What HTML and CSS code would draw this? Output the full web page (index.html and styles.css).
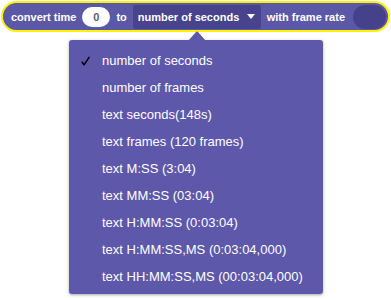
FILE: index.html
```html
<!DOCTYPE html>
<html>
<head>
<meta charset="utf-8">
<link rel="stylesheet" href="styles.css">
</head>
<body>
<div class="stage">
  <div class="block">
    <span class="label first">convert time</span>
    <span class="num">0</span>
    <span class="label">to</span>
    <span class="field">number of seconds<svg class="caret" width="8" height="5" viewBox="0 0 8 5"><path d="M0 0 L8 0 L4 5 Z" fill="#fff"/></svg></span>
    <span class="label">with frame rate</span>
    <span class="slot"></span>
  </div>
  <div class="menu">
    <svg class="pointer" width="18" height="10" viewBox="0 0 18 10"><path d="M0 10 L8 1 Q9 0 10 1 L18 10 Z" fill="#5d58a9"/></svg>
    <div class="item"><svg class="check" width="9" height="10" viewBox="0 0 9 10"><path d="M0.8 5.6 L3 8.8 L8.4 0.8" fill="none" stroke="#000" stroke-width="1.5" stroke-linejoin="round"/></svg>number of seconds</div>
    <div class="item">number of frames</div>
    <div class="item">text seconds(148s)</div>
    <div class="item">text frames (120 frames)</div>
    <div class="item">text M:SS (3:04)</div>
    <div class="item">text MM:SS (03:04)</div>
    <div class="item">text H:MM:SS (0:03:04)</div>
    <div class="item">text H:MM:SS,MS (0:03:04,000)</div>
    <div class="item">text HH:MM:SS,MS (00:03:04,000)</div>
  </div>
</div>
</body>
</html>
```
FILE: styles.css
```css
html, body {
  margin: 0;
  padding: 0;
  background: #ffffff;
}
.stage {
  width: 391px;
  height: 300px;
  padding-top: 1px;
  padding-left: 1px;
  box-sizing: border-box;
  font-family: "Liberation Sans", Arial, sans-serif;
}
.block {
  display: flex;
  align-items: center;
  width: 389px;
  height: 31px;
  box-sizing: border-box;
  border: 2px solid #fff200;
  border-radius: 16px;
  background: #5c58a8;
  padding: 0 2px 0 8px;
  gap: 6px;
}
.label {
  color: #ffffff;
  font-weight: bold;
  font-size: 11px;
  white-space: nowrap;
}
.num {
  width: 28px;
  height: 20px;
  border-radius: 10px;
  background: #ffffff;
  color: #575e75;
  font-size: 11px;
  font-weight: bold;
  display: flex;
  align-items: center;
  justify-content: center;
}
.field {
  display: flex;
  align-items: center;
  height: 24px;
  width: 128px;
  box-sizing: border-box;
  padding-left: 5px;
  border-radius: 3px;
  background: #47438d;
  color: #ffffff;
  font-weight: bold;
  font-size: 11px;
  white-space: nowrap;
}
.caret {
  margin-left: 8px;
}
.slot {
  width: 33px;
  height: 24px;
  border-radius: 12px;
  background: #45418a;
  margin-left: 2px;
}
.menu {
  position: relative;
  margin-left: 68px;
  margin-top: 8px;
  width: 254px;
  height: 254px;
  box-sizing: border-box;
  background: #5d58a9;
  border-radius: 3px;
  box-shadow: 0 1px 3px rgba(0, 0, 0, 0.35);
  padding: 7px 0 4px 0;
}
.pointer {
  position: absolute;
  left: 119px;
  top: -9px;
}
.item {
  position: relative;
  height: 27px;
  display: flex;
  align-items: center;
  padding-left: 33px;
  color: #ffffff;
  font-size: 13px;
  white-space: nowrap;
}
.check {
  position: absolute;
  left: 12px;
  top: 9px;
}
```
